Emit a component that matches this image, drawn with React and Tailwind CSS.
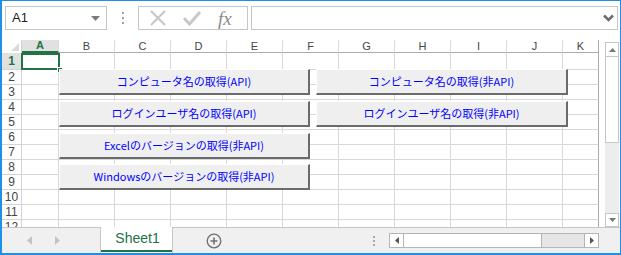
import React from 'react';

const cols = [
  ['A', 37],
  ['B', 56],
  ['C', 56],
  ['D', 56],
  ['E', 56],
  ['F', 56],
  ['G', 56],
  ['H', 56],
  ['I', 56],
  ['J', 56],
  ['K', 36],
];

const rows = [1, 2, 3, 4, 5, 6, 7, 8, 9, 10, 11, 12];

const buttons = [
  { label: 'コンピュータ名の取得(API)', cls: 'left-[57px] top-[29px] w-[251px]' },
  { label: 'ログインユーザ名の取得(API)', cls: 'left-[57px] top-[61px] w-[251px]' },
  { label: 'コンピュータ名の取得(非API)', cls: 'left-[314px] top-[29px] w-[252px]' },
  { label: 'ログインユーザ名の取得(非API)', cls: 'left-[314px] top-[61px] w-[252px]' },
  { label: 'Excelのバージョンの取得(非API)', cls: 'left-[57px] top-[93px] w-[251px]' },
  { label: 'Windowsのバージョンの取得(非API)', cls: 'left-[57px] top-[124px] w-[251px]' },
];

const jp = { fontFamily: '"Noto Sans CJK JP", "Liberation Sans", sans-serif' };

const SheetButton = ({ label, cls }) => (
  <button
    type="button"
    className={`absolute ${cls} h-[26px] flex items-center justify-center bg-[#efefef] border-t border-l border-t-white border-l-white border-r-2 border-b-2 border-r-[#6b6b6b] border-b-[#6b6b6b] text-[11px] leading-none text-[#0000ff]`}
    style={jp}
  >
    {label}
  </button>
);

const FormulaBar = () => (
  <div className="h-[39px] flex items-start pt-[5px] pl-[3px]">
    {/* name box */}
    <div className="w-[102px] h-[24px] border border-[#c6c6c6] flex items-center justify-between pl-[6px] pr-[6px]">
      <span className="text-[13px] text-[#222]">A1</span>
      <svg width="9" height="5" viewBox="0 0 9 5">
        <path d="M0 0 L9 0 L4.5 5 Z" fill="#7a7a7a" />
      </svg>
    </div>
    {/* dots */}
    <div className="w-[31px] h-[24px] flex flex-col items-center justify-center gap-[3px]">
      <div className="w-[2px] h-[2px] bg-[#a0a0a0]" />
      <div className="w-[2px] h-[2px] bg-[#a0a0a0]" />
      <div className="w-[2px] h-[2px] bg-[#a0a0a0]" />
    </div>
    {/* cancel / enter / fx */}
    <div className="w-[110px] h-[24px] border border-[#c6c6c6] flex items-center">
      <svg width="18" height="16" viewBox="0 0 18 16" className="ml-[10px]">
        <path d="M2 1 L16 15 M16 1 L2 15" stroke="#c8c8c8" strokeWidth="2.2" />
      </svg>
      <svg width="18" height="16" viewBox="0 0 18 16" className="ml-[16px]">
        <path d="M1 8 L6.5 14 L17 2" stroke="#c8c8c8" strokeWidth="3" fill="none" />
      </svg>
      <span
        className="ml-[17px] text-[19px] leading-none italic text-[#8a8a8a]"
        style={{ fontFamily: '"Liberation Serif", serif' }}
      >
        fx
      </span>
    </div>
    {/* formula input */}
    <div className="ml-[3px] w-[367px] h-[24px] border border-[#c6c6c6] flex items-center justify-end pr-[3px]">
      <svg width="11" height="8" viewBox="0 0 11 8">
        <path d="M1 1.5 L5.5 6 L10 1.5" stroke="#6e6e6e" strokeWidth="2.6" fill="none" />
      </svg>
    </div>
  </div>
);

const Grid = () => (
  <div className="h-[187px] flex">
    <div className="relative w-[601px] overflow-hidden" style={{ fontFamily: '"Liberation Sans", sans-serif' }}>
      {/* header */}
      <div className="flex h-[13px]">
        <div className="w-[20px] h-full border-r border-[#d4d4d4] relative">
          <svg width="8" height="8" viewBox="0 0 8 8" className="absolute right-[2px] bottom-[2px]">
            <path d="M8 0 L8 8 L0 8 Z" fill="#dadada" />
          </svg>
        </div>
        {cols.map(([c, w], i) => (
          <div
            key={c}
            className={`h-full flex items-center justify-center text-[11px] leading-[11px] ${
              i === 0
                ? 'bg-[#e1e1e1] text-[#217346] font-bold border-b-2 border-[#217346]'
                : 'text-[#444] border-b border-[#ababab]'
            } ${i === cols.length - 1 ? 'border-r border-r-[#ababab]' : 'border-r border-r-[#dcdcdc]'}`}
            style={{ width: w }}
          >
            {c}
          </div>
        ))}
      </div>
      {/* rows */}
      {rows.map((r) => (
        <div key={r} className={`flex ${r === 1 ? 'h-[17px]' : 'h-[15px]'}`}>
          <div
            className={`w-[20px] h-full border-r border-b border-[#d4d4d4] flex items-center justify-center text-[12px] leading-none ${
              r === 1 ? 'bg-[#e1e1e1] text-[#217346] font-bold border-r-[#9a9a9a]' : 'text-[#444]'
            }`}
          >
            {r}
          </div>
          {cols.map(([c, w], i) => (
            <div
              key={c}
              className={`h-full border-b border-[#d8d8d8] border-r ${
                i === cols.length - 1 ? 'border-r-[#ababab]' : 'border-r-[#d8d8d8]'
              }`}
              style={{ width: w }}
            />
          ))}
        </div>
      ))}
      {/* selection */}
      <div className="absolute left-[19px] top-[13px] w-[39px] h-[17px] border-2 border-[#217346]" />
      <div className="absolute left-[55px] top-[27px] w-[6px] h-[6px] bg-[#217346] border border-white" />
      {buttons.map((b) => (
        <SheetButton key={b.label} label={b.label} cls={b.cls} />
      ))}
    </div>
    {/* vertical scrollbar */}
    <div className="ml-[2px] w-[14px] pt-[2px] flex flex-col">
      <div className="h-[15px] border border-[#c6c6c6] flex items-center justify-center bg-white">
        <svg width="7" height="4" viewBox="0 0 7 4">
          <path d="M0 4 L7 4 L3.5 0 Z" fill="#777" />
        </svg>
      </div>
      <div className="h-[86px] border border-t-0 border-[#c6c6c6] bg-white" />
      <div className="flex-1 bg-[#ededed]" />
      <div className="h-[14px] border border-[#c6c6c6] flex items-center justify-center bg-white">
        <svg width="7" height="4" viewBox="0 0 7 4">
          <path d="M0 0 L7 0 L3.5 4 Z" fill="#777" />
        </svg>
      </div>
    </div>
  </div>
);

const TabBar = () => (
  <div className="h-[26px] flex bg-[#f0f0f0]">
    <div className="w-[98px] h-full border-t border-[#c6c6c6] flex items-center">
      <svg width="5" height="9" viewBox="0 0 5 9" className="ml-[25px]">
        <path d="M5 0 L5 9 L0 4.5 Z" fill="#c4c4c4" />
      </svg>
      <svg width="5" height="9" viewBox="0 0 5 9" className="ml-[23px]">
        <path d="M0 0 L0 9 L5 4.5 Z" fill="#c4c4c4" />
      </svg>
    </div>
    <div className="w-[73px] h-full bg-white border-l border-r border-[#c6c6c6] flex flex-col">
      <div className="flex-1 flex items-center justify-center text-[14px] text-[#217346] pl-[2px]" style={{ fontFamily: '"Liberation Sans", sans-serif' }}>
        Sheet1
      </div>
      <div className="h-[2px] bg-[#217346] mb-[1px]" />
    </div>
    <div className="flex-1 h-full border-t border-[#c6c6c6] flex items-center">
      <svg width="16" height="16" viewBox="0 0 16 16" className="ml-[33px]">
        <circle cx="8" cy="8" r="6.8" stroke="#707070" strokeWidth="1.3" fill="none" />
        <path d="M8 4.5 V11.5 M4.5 8 H11.5" stroke="#707070" strokeWidth="1.6" />
      </svg>
      <div className="ml-[151px] flex flex-col gap-[2px]">
        <div className="w-[2px] h-[2px] bg-[#a8a8a8]" />
        <div className="w-[2px] h-[2px] bg-[#a8a8a8]" />
        <div className="w-[2px] h-[2px] bg-[#a8a8a8]" />
      </div>
      <div className="ml-[14px] w-[210px] h-[15px] border border-[#b5b5b5] flex bg-white">
        <div className="w-[14px] h-full border-r border-[#b5b5b5] flex items-center justify-center">
          <svg width="4" height="7" viewBox="0 0 4 7">
            <path d="M4 0 L4 7 L0 3.5 Z" fill="#555" />
          </svg>
        </div>
        <div className="w-[138px] h-full bg-white border-r border-[#b5b5b5]" />
        <div className="flex-1 h-full bg-[#e6e6e6]" />
        <div className="w-[14px] h-full border-l border-[#b5b5b5] flex items-center justify-center">
          <svg width="4" height="7" viewBox="0 0 4 7">
            <path d="M0 0 L0 7 L4 3.5 Z" fill="#555" />
          </svg>
        </div>
      </div>
    </div>
  </div>
);

const App = () => (
  <div
    className="w-[621px] h-[255px] bg-white border-l-2 border-t border-r border-b-2 border-[#1e90e8] overflow-hidden"
    style={{ fontFamily: '"Liberation Sans", sans-serif' }}
  >
    <FormulaBar />
    <Grid />
    <TabBar />
  </div>
);

export default App;
